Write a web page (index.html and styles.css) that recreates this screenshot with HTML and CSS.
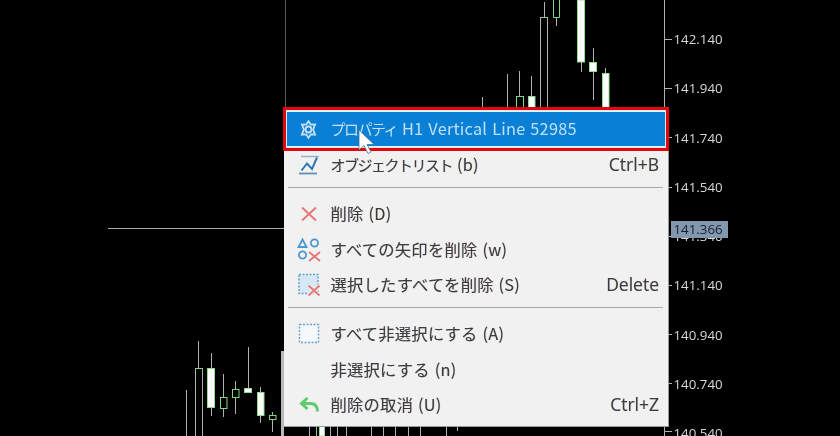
FILE: index.html
```html
<!DOCTYPE html>
<html lang="ja">
<head>
  <meta charset="UTF-8" />
  <title>Chart context menu</title>
  <link rel="stylesheet" href="styles.css">
</head>
<body>
  <div class="chart">
    <svg class="candles" width="840" height="436" viewBox="0 0 840 436">
      <path class="object-line" d="M285.500 0V108"/>
      <path class="object-line bright" d="M108 228.500H284"/>
      <g class="wick">
        <path d="M664.500 0V436M664 39.500h8M664 88.500h8M664 137.500h8M664 187.500h8M664 236.500h8M664 285.500h8M664 334.500h8M664 383.500h8M664 431.500h8"/>
        <path d="M482.500 97V108M507.500 74V108M519.500 71V97M531.500 76V97M544.500 2V17M540.500 17V108M547.500 17V108M556.500 17V26M581.500 62V72M593.500 48V100M605.500 68V73"/>
        <path d="M186.500 390V436M198.500 341V368M195.500 368V436M202.500 368V436M211.500 353V416M223.500 374V417M235.500 381V414M248.500 347V388M260.500 387V423M272.500 412V432"/>
        <path d="M309.500 426V436M316.500 426V436M330.500 426V436M337.500 426V436M346.500 426V436M371.500 426V436M383.500 426V436M395.500 426V436M408.500 426V436M420.500 426V436M446.500 426V436M457.500 426V431"/>
      </g>
      <g class="hollow">
        <path d="M540.500 17.500h7M195.500 368.500h7"/>
        <path d="M553.500 0V17.500h6V0"/>
        <rect x="516.500" y="96.500" width="7" height="12"/>
        <rect x="220.500" y="397.500" width="6.500" height="11"/>
        <rect x="232.500" y="389.500" width="6.500" height="8"/>
        <rect x="269.500" y="415.500" width="6.500" height="4"/>
      </g>
      <g class="solid">
        <rect x="577.500" y="0" width="7" height="62"/>
        <rect x="589.500" y="62.500" width="7" height="9"/>
        <rect x="602.500" y="73.500" width="6.500" height="35"/>
        <rect x="528.500" y="96.500" width="6.500" height="12"/>
        <rect x="207.500" y="368.500" width="7" height="39"/>
        <rect x="244.500" y="388.500" width="7" height="4"/>
        <rect x="257.500" y="392.500" width="6.500" height="23"/>
        <rect x="319.500" y="420" width="5" height="16"/>
      </g>
      <rect class="edge" x="281" y="351" width="3" height="85"/>
    </svg>

    <div class="axis">
      <span class="price">142.140</span>
      <span class="price">141.940</span>
      <span class="price">141.740</span>
      <span class="price">141.540</span>
      <span class="price">141.340</span>
      <span class="price">141.140</span>
      <span class="price">140.940</span>
      <span class="price">140.740</span>
      <span class="price">140.540</span>
    </div>
    <span class="current">141.366</span>

    <div class="menu">
      <div class="item active">
        <span class="icon">
          <svg width="23" height="23" viewBox="0 0 20 20" fill="none" stroke="#c4e0f4" stroke-width="1.600">
            <path d="M10 2.800l2 3 3.700-.1-1.700 4.300 1.700 4.300-3.700-.1-2 3-2-3-3.700.1L6 10 4.300 5.700l3.700.1z"/>
            <circle cx="10" cy="10" r="2.600"/>
          </svg>
        </span>
        <span class="label"><span class="kana">プロパティ</span> H1 Vertical Line 52985</span>
      </div>
      <div class="item first">
        <span class="icon">
          <svg width="24" height="22" viewBox="0 0 24 22" fill="none">
            <path d="M4 2.500h18" stroke="#8fb0ca" stroke-width="1.400"/>
            <path d="M2 19.500h18" stroke="#5f8fb5" stroke-width="1.800"/>
            <path d="M4.500 16.500l5.500-7 5 5.500 5-11.500" stroke="#2f78b5" stroke-width="2"/>
          </svg>
        </span>
        <span class="label"><span class="kana">オブジェクトリスト</span> (b)</span>
        <span class="keys">Ctrl+B</span>
      </div>
      <div class="sep"></div>
      <div class="item">
        <span class="icon">
          <svg width="20" height="20" viewBox="0 0 20 20" stroke="#e27a7a" stroke-width="2"><path d="M3 3.500l14 13M17 3.500L3 16.500"/></svg>
        </span>
        <span class="label">削除 (D)</span>
      </div>
      <div class="item">
        <span class="icon">
          <svg width="24" height="24" viewBox="0 0 24 24" fill="none" stroke="#4d97cf" stroke-width="1.800">
            <path d="M5.500 1.500l4 7.500h-8z"/>
            <circle cx="17.500" cy="5" r="3.600"/>
            <circle cx="5.500" cy="17" r="3.600"/>
            <path d="M12 14l11 9M23 14l-11 9" stroke="#e27a7a" stroke-width="2"/>
          </svg>
        </span>
        <span class="label">すべての矢印を削除 (w)</span>
      </div>
      <div class="item">
        <span class="icon">
          <svg width="24" height="24" viewBox="0 0 24 24" fill="none">
            <rect x="2" y="1.500" width="19" height="19" fill="#d5e8f6" stroke="#6a9fc8" stroke-width="1.500" stroke-dasharray="2 1.500"/>
            <path d="M11.500 12.500l11 10M22.500 12.500l-11 10" stroke="#f1f1f1" stroke-width="4"/>
            <path d="M11.500 12.500l11 10M22.500 12.500l-11 10" stroke="#e27a7a" stroke-width="2"/>
          </svg>
        </span>
        <span class="label">選択したすべてを削除 (S)</span>
        <span class="keys">Delete</span>
      </div>
      <div class="sep"></div>
      <div class="item">
        <span class="icon">
          <svg width="22" height="22" viewBox="0 0 22 22" fill="none">
            <rect x="1.500" y="1.500" width="19" height="18" fill="#f6f9fb" stroke="#6a9fc8" stroke-width="1.400" stroke-dasharray="2 1.500"/>
          </svg>
        </span>
        <span class="label">すべて非選択にする (A)</span>
      </div>
      <div class="item">
        <span class="icon"></span>
        <span class="label">非選択にする (n)</span>
      </div>
      <div class="item">
        <span class="icon">
          <svg width="22" height="20" viewBox="0 0 22 20" fill="none" stroke="#5fca70" stroke-width="3">
            <path d="M9.500 3L3.500 8.500 9.500 14"/>
            <path d="M4 8.500h8.500c4.500 0 7 2.500 7 8"/>
          </svg>
        </span>
        <span class="label">削除の取消 (U)</span>
        <span class="keys">Ctrl+Z</span>
      </div>

      <div class="highlight"></div>
      <svg class="cursor" width="20" height="26" viewBox="0 0 20 26">
        <path d="M1 1v20l5-4.500 4 8 3-1.500-4-7.500h7z" fill="#fff" stroke="#4a6f8c" stroke-width=".8"/>
      </svg>
    </div>
  </div>
</body>
</html>
```
FILE: styles.css
```css
* {
  box-sizing: border-box;
}

body {
  margin: 0;
  background: #000;
  font-family: "Noto Sans CJK JP", "Noto Sans", sans-serif;
  overflow: hidden;
}

.chart {
  position: relative;
  width: 840px;
  height: 436px;
  background: #000;
  overflow: hidden;
  filter: blur(0.35px);
}

.candles {
  position: absolute;
  left: 0;
  top: 0;
}

.object-line {
  fill: none;
  stroke: #5a5a5a;
  stroke-width: 1;
}

.object-line.bright {
  stroke: #a8a8a8;
}

.wick {
  fill: none;
  stroke: #b0b0b0;
  stroke-width: 1;
}

.hollow {
  fill: #000;
  stroke: #7fd77f;
  stroke-width: 1;
}

.solid {
  fill: #fff;
  stroke: #8fdc8f;
  stroke-width: 1;
}

.edge {
  fill: #b8b8b8;
}

.axis {
  position: absolute;
  left: 673.500px;
  top: 29px;
  display: flex;
  flex-direction: column;
  gap: 29.250px;
}

.price {
  height: 20px;
  line-height: 20px;
  font-family: "Open Sans", sans-serif;
  font-size: 13.300px;
  color: #d8d8d8;
}

.current {
  position: absolute;
  left: 671px;
  top: 221px;
  width: 57px;
  height: 17px;
  line-height: 17px;
  padding-left: 2.500px;
  background: #8498ad;
  font-family: "Open Sans", sans-serif;
  font-size: 13.300px;
  color: #10202f;
}

.menu {
  position: absolute;
  left: 284px;
  top: 108px;
  width: 385px;
  height: 319px;
  padding: 4px 3px 0 3px;
  background: #f1f1f1;
  border-right: 1px solid #9a9a9a;
  border-bottom: 1px solid #9a9a9a;
  color: #3c3c3c;
  font-size: 16.300px;
  letter-spacing: 0.25px;
  word-spacing: 1px;
}

.item {
  display: flex;
  align-items: center;
  height: 35.500px;
  line-height: 1;
  padding-bottom: 2px;
  text-shadow: -0.4px 0 rgba(230, 120, 20, 0.28), 0.4px 0 rgba(30, 120, 230, 0.28);
}

.item.active {
  height: 34px;
  background: #0a7fd6;
  color: #bfe0f6;
  text-shadow: none;
}

.item.first {
  margin-top: 1.500px;
}

.icon {
  flex: none;
  width: 43.500px;
  padding-right: 0.500px;
  padding-top: 2px;
  display: flex;
  align-items: center;
  justify-content: center;
}

.label {
  flex: 1;
  white-space: nowrap;
}

.kana {
  font-size: 15px;
  letter-spacing: -1.500px;
}

.keys {
  padding-right: 6px;
  font-family: "Open Sans", sans-serif;
  font-size: 17.500px;
  letter-spacing: 0;
}

.sep {
  height: 1px;
  margin: 4px 2px 8.500px 1px;
  background: #a8a8a8;
}

.highlight {
  position: absolute;
  left: -1px;
  top: -1px;
  width: 386px;
  height: 44px;
  border: 3px solid #e0060c;
  box-shadow: inset 0 0 0 1px #d8e8f4;
}

.cursor {
  position: absolute;
  left: 74px;
  top: 21px;
}
```
